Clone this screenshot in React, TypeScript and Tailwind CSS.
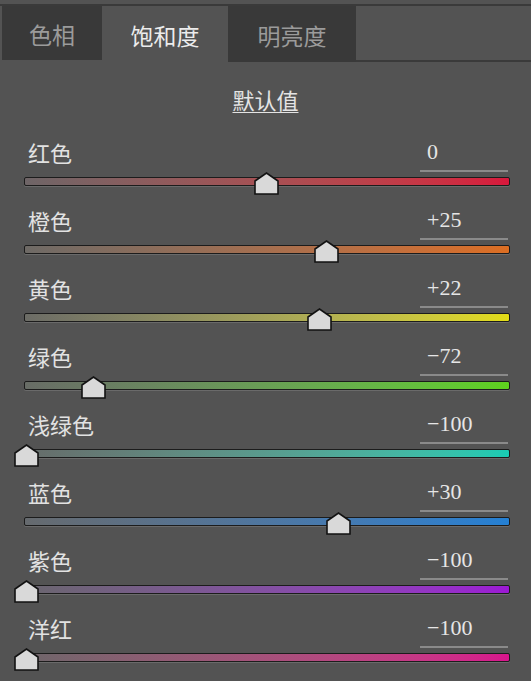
import { useState } from "react";

type Row = { label: string; value: number; track: string };

const rows: Row[] = [
  { label: "红色", value: 0, track: "bg-linear-to-r from-[#6e6567] to-[#d8173c]" },
  { label: "橙色", value: 25, track: "bg-linear-to-r from-[#6e6a66] to-[#dc6e22]" },
  { label: "黄色", value: 22, track: "bg-linear-to-r from-[#6c6c66] to-[#e2dc14]" },
  { label: "绿色", value: -72, track: "bg-linear-to-r from-[#686c66] to-[#5ed21c]" },
  { label: "浅绿色", value: -100, track: "bg-linear-to-r from-[#666c6a] to-[#18ccb4]" },
  { label: "蓝色", value: 30, track: "bg-linear-to-r from-[#666a6e] to-[#2480d4]" },
  { label: "紫色", value: -100, track: "bg-linear-to-r from-[#6a666e] to-[#9c18d4]" },
  { label: "洋红", value: -100, track: "bg-linear-to-r from-[#6e666a] to-[#d8148c]" },
];

const fmt = (v: number) => (v > 0 ? `+${v}` : v < 0 ? `\u2212${-v}` : "0");

const Thumb = ({ value }: { value: number }) => {
  // thumb centre sits 2.5px into the track at -100, 480px travel
  const left = 2.5 + (480 * (value + 100)) / 200 - 12.5;
  return (
    <svg
      width="25"
      height="23"
      viewBox="0 0 25 23"
      className="absolute top-[-5px]"
      style={{ left }}
    >
      <polygon
        points="1,9 12.5,1 24,9 24,22 1,22"
        fill="#d9d9d9"
        stroke="#121212"
        strokeWidth="1.6"
        strokeLinejoin="miter"
      />
    </svg>
  );
};

const SliderRow = ({ row }: { row: Row }) => (
  <div className="h-[68px] pt-[7px]">
    <div className="flex items-start justify-between">
      <span className="ml-[28px] text-[22px] leading-[30px] text-[#e2e2e2]">{row.label}</span>
      <div className="mr-[23px] h-[35px] w-[88px] border-b-2 border-[#8a8a8a] pl-[7px] font-['Liberation_Serif',serif] text-[22px] leading-[30px] text-[#e6e6e6]">
        {fmt(row.value)}
      </div>
    </div>
    <div className="relative mt-[5px] ml-[24px] mr-[21px] h-[9px]">
      <div
        className={`h-[9px] rounded-[2px] border border-[#1c1c1c] shadow-[0_1px_0_#6a6a6a] ${row.track}`}
      />
      <Thumb value={row.value} />
    </div>
  </div>
);

export default function App() {
  const [tab, setTab] = useState(1);
  const tabs = ["色相", "饱和度", "明亮度"];

  return (
    <div className="h-[681px] w-[531px] overflow-hidden bg-[#535353] font-['Noto_Sans_CJK_SC','Noto_Sans',sans-serif]">
      <div className="mt-[4px] flex h-[58px] border-t-2 border-[#3a3a3a]">
        <div className="w-[2px]" />
        {tabs.map((t, i) => {
          const active = i === tab;
          const base =
            i === 0
              ? "w-[100px] h-[54px]"
              : i === 1
              ? "w-[126px] h-[56px]"
              : "w-[128px] h-[56px]";
          return (
            <button
              key={t}
              onClick={() => setTab(i)}
              className={`${base} flex items-center justify-center pt-[3px] text-[23px] ${
                active ? "bg-[#535353] text-[#ececec]" : "bg-[#393939] text-[#9b9b9b]"
              }`}
            >
              {t}
            </button>
          );
        })}
        <div className="flex-1 border-b-2 border-[#3a3a3a]" />
      </div>

      <div className="mt-[22px] flex justify-center">
        <span className="text-[22px] leading-[30px] text-[#e4e4e4] underline decoration-1 underline-offset-[3px]">
          默认值
        </span>
      </div>

      <div className="mt-[16px]">
        {rows.map((r) => (
          <SliderRow key={r.label} row={r} />
        ))}
      </div>
    </div>
  );
}
